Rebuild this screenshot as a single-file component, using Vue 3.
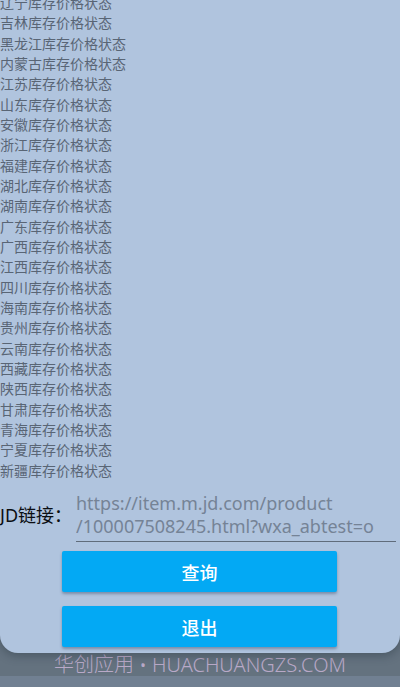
<script setup>
import { ref } from 'vue'

const provinces = [
  '辽宁',
  '吉林',
  '黑龙江',
  '内蒙古',
  '江苏',
  '山东',
  '安徽',
  '浙江',
  '福建',
  '湖北',
  '湖南',
  '广东',
  '广西',
  '江西',
  '四川',
  '海南',
  '贵州',
  '云南',
  '西藏',
  '陕西',
  '甘肃',
  '青海',
  '宁夏',
  '新疆',
]

const link = ref('')
const placeholder = 'https://item.m.jd.com/product\n/100007508245.html?wxa_abtest=o'
</script>

<template>
  <div class="page">
    <main class="panel">
      <ul class="province-list">
        <li v-for="name in provinces" :key="name">{{ name }}库存价格状态</li>
      </ul>

      <div class="link-row">
        <label for="jd-link">JD链接：</label>
        <textarea id="jd-link" v-model="link" rows="2" :placeholder="placeholder"></textarea>
      </div>

      <div class="actions">
        <button type="button">查询</button>
        <button type="button">退出</button>
      </div>
    </main>

    <footer class="footer">
      <p>华创应用 • HUACHUANGZS.COM</p>
    </footer>
  </div>
</template>

<style>
body {
  background: #718092;
}
</style>

<style scoped>
.page {
  min-height: 100vh;
  overflow: hidden;
  display: flex;
  flex-direction: column;
  background: #64727f;
  font-family: 'Noto Sans', 'Noto Sans CJK SC', sans-serif;
}

.panel {
  position: relative;
  padding-bottom: 6px;
  border-radius: 0 0 18px 18px;
  background: #b0c4de;
  box-shadow: 0 3px 10px rgba(30, 42, 54, 0.35);
}

/* the list is scrolled a little past its first row */
.province-list {
  display: grid;
  grid-auto-rows: 1fr;
  align-items: center;
  min-height: 488px;
  margin: -8px 0 1px;
  padding: 0;
  list-style: none;
  color: #596575;
  font-family: 'Noto Sans CJK SC', sans-serif;
  font-size: 14px;
  line-height: 20px;
}

.link-row {
  display: flex;
  align-items: center;
  padding-right: 4px;
}

.link-row label {
  flex: 0 0 76px;
  margin-top: 6px;
  color: #0b0e12;
  font-size: 18px;
  line-height: 24px;
  white-space: nowrap;
}

.link-row textarea {
  flex: 1;
  min-width: 0;
  box-sizing: border-box;
  padding: 11px 0 3px;
  border: 0;
  border-bottom: 1px solid #606c7b;
  border-radius: 0;
  outline: none;
  resize: none;
  overflow: hidden;
  background: transparent;
  color: #111;
  font-family: 'Noto Sans', 'Noto Sans CJK SC', sans-serif;
  font-size: 18px;
  line-height: 23px;
}

.link-row textarea::placeholder {
  color: #758396;
  opacity: 1;
}

.actions {
  display: grid;
  gap: 14px;
  padding: 9px 63px 0 62px;
}

.actions button {
  height: 41px;
  padding: 0;
  border: 0;
  border-radius: 2px;
  background: #03a9f4;
  box-shadow: 0 2px 3px rgba(40, 60, 90, 0.4);
  color: #fff;
  font-family: 'Noto Sans CJK SC', sans-serif;
  font-size: 18px;
  font-weight: 500;
  line-height: 24px;
  cursor: pointer;
}

.footer {
  flex: 1;
  border-bottom: 11px solid #718092;
}

.footer p {
  margin: 0;
  color: #b9a9c8;
  font-family: 'Noto Sans', 'Noto Sans CJK SC', sans-serif;
  font-size: 20px;
  font-weight: 300;
  line-height: 23px;
  text-align: center;
  white-space: nowrap;
}
</style>
